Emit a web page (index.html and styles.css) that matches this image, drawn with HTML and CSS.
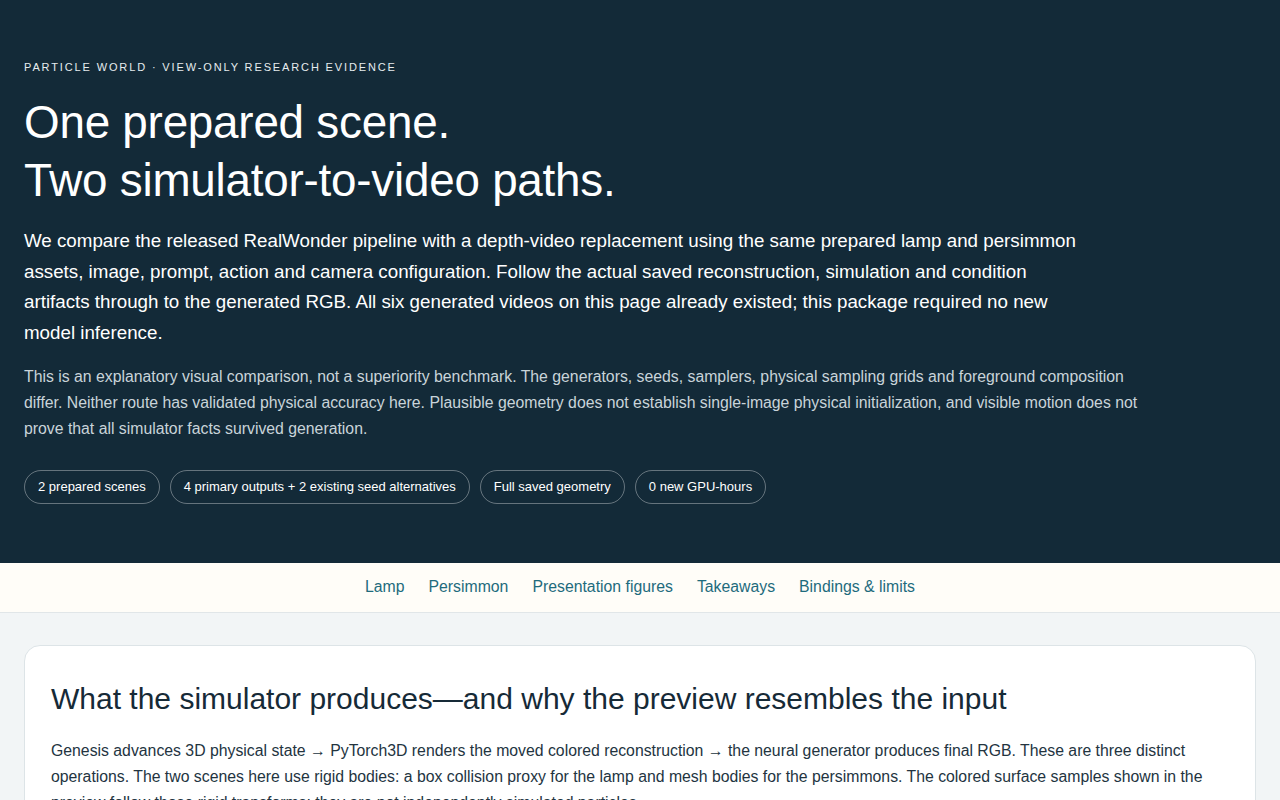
FILE: index.html
```html
<!DOCTYPE html>
<html lang="en">
<head>
    <meta charset="UTF-8">
    <meta name="viewport" content="width=device-width, initial-scale=1.0">
    <title>Particle World · Two simulator-to-video paths</title>
    <link rel="stylesheet" href="styles.css">
</head>
<body>
    <header class="hero">
        <p class="eyebrow">Particle World · View-only research evidence</p>
        <h1>One prepared scene.<br>Two simulator-to-video paths.</h1>
        <p class="lead">We compare the released RealWonder pipeline with a depth-video replacement using the same prepared lamp and persimmon assets, image, prompt, action and camera configuration. Follow the actual saved reconstruction, simulation and condition artifacts through to the generated RGB. All six generated videos on this page already existed; this package required no new model inference.</p>
        <p class="note">This is an explanatory visual comparison, not a superiority benchmark. The generators, seeds, samplers, physical sampling grids and foreground composition differ. Neither route has validated physical accuracy here. Plausible geometry does not establish single-image physical initialization, and visible motion does not prove that all simulator facts survived generation.</p>
        <ul class="pills">
            <li>2 prepared scenes</li>
            <li>4 primary outputs + 2 existing seed alternatives</li>
            <li>Full saved geometry</li>
            <li>0 new GPU-hours</li>
        </ul>
    </header>

    <nav class="toc">
        <a href="#lamp">Lamp</a>
        <a href="#persimmon">Persimmon</a>
        <a href="#figures">Presentation figures</a>
        <a href="#takeaways">Takeaways</a>
        <a href="#limits">Bindings &amp; limits</a>
    </nav>

    <main class="content">
        <section class="card">
            <h2>What the simulator produces—and why the preview resembles the input</h2>
            <p>Genesis advances 3D physical state → PyTorch3D renders the moved colored reconstruction → the neural generator produces final RGB. These are three distinct operations. The two scenes here use rigid bodies: a box collision proxy for the lamp and mesh bodies for the persimmons. The colored surface samples shown in the preview follow those rigid transforms; they are not independently simulated particles.</p>
        </section>
    </main>
</body>
</html>
```

FILE: styles.css
```css
body {
    font-family: "Liberation Sans", Arial, sans-serif;
    background-color: #f2f5f6;
    color: #1b2c38;
    margin: 0;
    padding: 0;
}
.hero {
    background-color: #132a38;
    color: #ffffff;
    padding: 60px 24px 59px;
}
.eyebrow {
    margin: 0;
    font-size: 11px;
    line-height: 14px;
    letter-spacing: 0.17em;
    text-transform: uppercase;
    color: #e6ecef;
}
h1 {
    margin: 20px 0 16px;
    font-size: 45.8px;
    font-weight: normal;
    line-height: 58px;
    letter-spacing: -0.005em;
}
.lead {
    margin: 0;
    max-width: 1062px;
    font-size: 18.75px;
    line-height: 30.5px;
}
.note {
    margin: 16px 0 0;
    max-width: 1130px;
    font-size: 15.8px;
    line-height: 26px;
    color: #c9d4da;
}
.pills {
    list-style: none;
    margin: 28px 0 0;
    padding: 0;
    display: flex;
    flex-wrap: wrap;
    gap: 10px;
}
.pills li {
    padding: 8px 13px;
    border: 1px solid rgba(255, 255, 255, 0.35);
    border-radius: 999px;
    font-size: 13px;
    line-height: 16px;
}
.toc {
    background-color: #fffdf8;
    border-bottom: 1px solid #e1e6e8;
    display: flex;
    justify-content: center;
    gap: 24px;
    padding: 14px 24px 15px;
}
.toc a {
    color: #1e6b7d;
    text-decoration: none;
    font-size: 15.8px;
    line-height: 20px;
}
.content {
    padding: 32px 24px;
}
.card {
    background: #ffffff;
    border: 1px solid #dde4e7;
    border-radius: 16px;
    padding: 31px 26px;
}
.card h2 {
    margin: 0 0 17px;
    font-size: 30px;
    font-weight: normal;
    line-height: 44px;
    color: #162a37;
}
.card p {
    margin: 0;
    font-size: 15.8px;
    line-height: 26px;
    color: #23343f;
}
```
